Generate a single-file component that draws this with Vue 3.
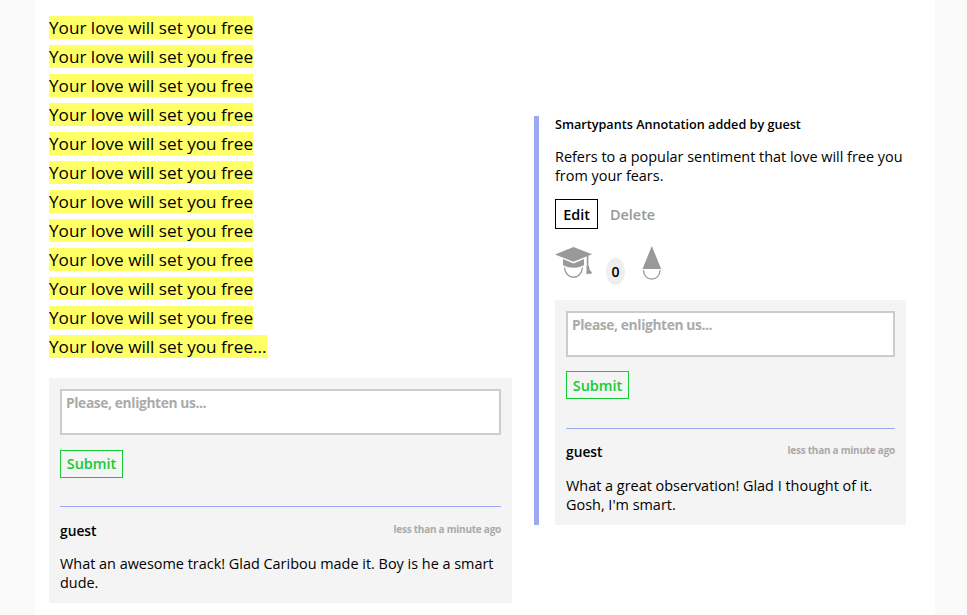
<script setup>
const lines = Array.from({ length: 12 }, (_, i) => 'Your love will set you free' + (i === 11 ? '...' : ''))
const songComment = 'What an awesome track! Glad Caribou made it. Boy is he a smart dude.'
const noteComment = "What a great observation! Glad I thought of it. Gosh, I'm smart."
</script>

<template>
  <div class="page">
    <main class="sheet">
      <section class="song">
        <div class="lyrics">
          <p v-for="(line, i) in lines" :key="i"><mark>{{ line }}</mark></p>
        </div>
        <div class="comments">
          <textarea class="field" placeholder="Please, enlighten us..."></textarea>
          <button class="submit">Submit</button>
          <article class="comment">
            <header><span class="author">guest</span><time>less than a minute ago</time></header>
            <p>{{ songComment }}</p>
          </article>
        </div>
      </section>

      <aside class="annotation">
        <h2>Smartypants Annotation added by guest</h2>
        <p class="body">Refers to a popular sentiment that love will free you from your fears.</p>
        <div class="actions">
          <button class="edit">Edit</button>
          <button class="delete">Delete</button>
        </div>
        <div class="votes">
          <svg class="grad" width="38" height="34" viewBox="0 0 38 34">
            <path d="M0 8.5 18.5 1 37 8.2 18.5 15.8Z" fill="#999" />
            <path d="M8 13.1 18.5 17.4 29 13.1V19.2Q18.5 24.5 8 19.2Z" fill="#999" />
            <path d="M9.5 21.5C10.5 34.5 26.5 34.5 27.5 21.5" fill="none" stroke="#999" stroke-width="1.3" />
            <path d="M32.6 10V21" fill="none" stroke="#999" stroke-width="1.6" />
            <path d="M31.4 20.5Q32.7 18.8 34 20.5 34 24 37 26.5 35.8 29 33.6 27.6 32.6 29 31.2 27.8 32 24 31.4 20.5Z" fill="#999" />
          </svg>
          <span class="count">0</span>
          <svg class="dunce" width="20" height="36" viewBox="0 0 20 36">
            <path d="M9.8 1 19.2 24H.5Z" fill="#999" />
            <path d="M1.5 25.3C1.5 37 18 37 18 25.3" fill="none" stroke="#999" stroke-width="1.3" />
          </svg>
        </div>
        <div class="comments">
          <textarea class="field" placeholder="Please, enlighten us..."></textarea>
          <button class="submit">Submit</button>
          <article class="comment">
            <header><span class="author">guest</span><time>less than a minute ago</time></header>
            <p>{{ noteComment }}</p>
          </article>
        </div>
      </aside>
    </main>
  </div>
</template>

<style>
body {
  background: #fafafa;
}
</style>

<style scoped>
.page {
  height: 615px;
  overflow: hidden;
  font: 14.43px/19px "Open Sans", sans-serif;
  color: #000;
}
.page * {
  box-sizing: border-box;
}
p, h2 {
  margin: 0;
}
.sheet {
  display: flex;
  align-items: flex-start;
  width: 900px;
  height: 615px;
  margin: 0 auto 0 35px;
  padding: 13px 29px 0 14px;
  background: #fff;
}
.song {
  width: 463px;
}
.lyrics {
  font-size: 17.15px;
  line-height: 29px;
}
mark {
  background: #ff6;
  color: #000;
}
.annotation {
  width: 372px;
  height: 409px;
  margin: 103px 0 0 22px;
  padding-left: 16px;
  border-left: 5px solid #9ca8ef;
}
h2 {
  font-size: 12.63px;
  line-height: 17px;
  font-weight: 600;
}
.body {
  margin-top: 14px;
}
.actions {
  display: flex;
  gap: 12px;
  margin-top: 14px;
}
button {
  padding: 0;
  font: 600 14.4px/19px "Open Sans", sans-serif;
  background: none;
  border: 0;
}
.edit {
  width: 43px;
  height: 30px;
  border: 1px solid #000;
  background: #fff;
  color: #000;
}
.delete {
  color: #999;
}
.votes {
  display: flex;
  align-items: flex-start;
  height: 55px;
  margin-top: 16px;
}
.grad {
  margin-top: 1px;
}
.count {
  width: 19px;
  height: 27px;
  margin: 13px 0 0 13px;
  border-radius: 50%;
  background: #eee;
  font-size: 14px;
  font-weight: 600;
  line-height: 27px;
  text-align: center;
}
.dunce {
  margin-left: 17px;
}
.comments {
  height: 225px;
  padding: 11px;
  background: #f4f4f4;
}
.song .comments {
  margin-top: 17px;
}
.field {
  display: block;
  width: 100%;
  height: 46px;
  padding: 2px 4px;
  border: 2px solid #ccc;
  border-radius: 0;
  background: #fff;
  resize: none;
  outline: 0;
  overflow: hidden;
  font: 700 13.8px/19px "Open Sans", sans-serif;
  letter-spacing: -0.38px;
}
.field::placeholder {
  color: #aaa;
  opacity: 1;
}
.submit {
  display: block;
  width: 63px;
  height: 28px;
  margin-top: 14px;
  border: 1px solid #1c3;
  color: #1c3;
}
.song .submit {
  margin-top: 15px;
  padding-bottom: 2px;
}
.comment {
  margin-top: 29px;
  padding-top: 13px;
  border-top: 1px solid #9ca8ef;
}
.song .comment {
  margin-top: 28px;
  padding-top: 14px;
}
header {
  display: flex;
  justify-content: space-between;
  margin-bottom: 15px;
}
.song header {
  margin-bottom: 14px;
}
.author {
  font-size: 13.8px;
  font-weight: 600;
}
time {
  padding-top: 1px;
  font-size: 10px;
  line-height: 15px;
  font-weight: 700;
  letter-spacing: -0.25px;
  color: #aaa;
}
</style>
